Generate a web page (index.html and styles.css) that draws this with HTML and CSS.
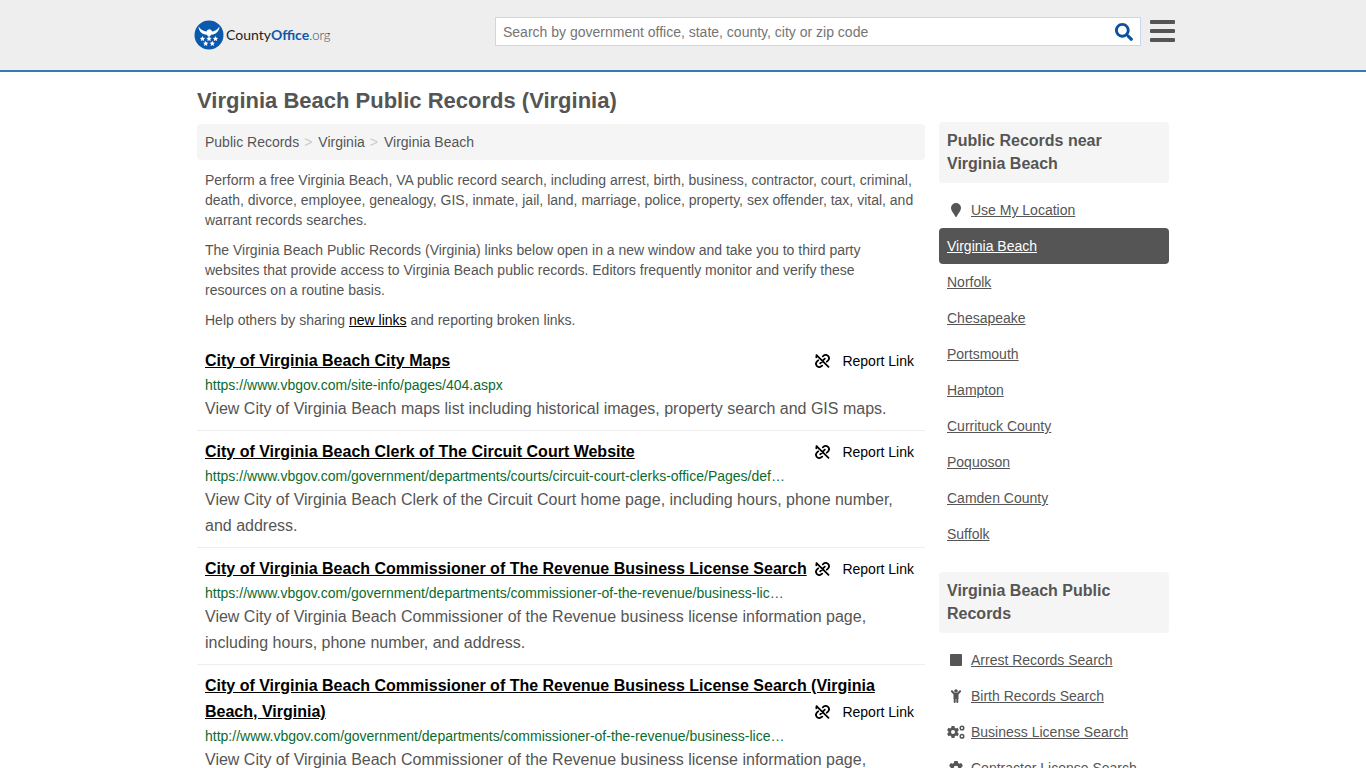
FILE: index.html
```html
<!DOCTYPE html>
<html lang="en">
<head>
<meta charset="utf-8">
<meta name="viewport" content="width=device-width, initial-scale=1">
<title>Virginia Beach Public Records (Virginia)</title>
<link rel="stylesheet" href="styles.css">
</head>
<body>
<svg class="sprite" aria-hidden="true">
  <symbol id="unlink" viewBox="0 0 15 14">
    <g fill="none" stroke="currentColor" stroke-width="1.800" stroke-linecap="round">
      <path d="M7.800 2.300C9.400.8 11.600.6 13 1.900c1.300 1.400 1.200 3.500-.3 5l-.9.800"/>
      <path d="M7.200 11.700C5.600 13.200 3.400 13.400 2 12.100.7 10.700.8 8.600 2.300 7.100l.9-.8"/>
      <path d="M1.500 1.200 13.500 12.800M9.800 4.700 5.200 9.300M1.300 3.300c0-.9.100-1.500.6-2"/>
    </g>
  </symbol>
  <symbol id="gear" viewBox="0.800 0 12.400 12.600">
    <path fill="currentColor" fill-rule="evenodd" d="M5.500 0h3l.4 1.800 1.100.7 1.800-.6 1.400 2.500L11.900 5.500v1.500l1.300 1.200-1.400 2.500-1.800-.6-1.100.7-.4 1.800h-3l-.4-1.800L4 10.100l-1.800.6L.8 8.200 2.100 7V5.500L.8 4.400l1.400-2.500 1.800.6 1.100-.7zM7 4.200a2.100 2.100 0 1 0 0 4.200 2.100 2.100 0 0 0 0-4.200z"/>
  </symbol>
</svg>
<header class="site-header">
  <div class="header-inner">
    <a class="logo" href="#" aria-label="CountyOffice.org">
      <svg class="logo-mark" viewBox="0 0 30 30" aria-hidden="true">
        <circle cx="15" cy="15" r="14.500" fill="#0b59ad"/>
        <g fill="#fff">
          <path d="M4.500 6.500c.3 4 2.500 7 6.500 8l2 .3 1 1.700h2l1-1.700 2-.3c4-1 6.200-4 6.500-8-2 3-4.500 4.600-7.300 5l-1.200-1.700-1.800-.6-1.800.9-.8 1.400C9.300 11.100 6.500 9.500 4.500 6.500z"/>
          <path id="star" d="m8.500 16 .8 1.700 1.800.2-1.300 1.300.3 1.900-1.600-.9-1.600.9.3-1.900-1.300-1.300 1.800-.2z"/>
          <use href="#star" x="6.500"/><use href="#star" x="13"/>
          <use href="#star" x="3.200" y="4.800"/><use href="#star" x="9.800" y="4.800"/>
        </g>
      </svg>
      <span class="logo-text">County<b>Office</b><span class="tld">.org</span></span>
    </a>
    <form class="search">
      <input class="search-input" type="search" aria-label="Search" placeholder="Search by government office, state, county, city or zip code">
      <button class="search-button" type="button" aria-label="Search"><svg viewBox="0 0 512 512" aria-hidden="true"><path fill="currentColor" d="M505 442.700L405.300 343c-4.500-4.500-10.600-7-17-7H372c27.600-35.300 44-79.700 44-128C416 93.100 322.900 0 208 0S0 93.100 0 208s93.100 208 208 208c48.300 0 92.700-16.400 128-44v16.300c0 6.400 2.500 12.500 7 17l99.700 99.700c9.400 9.400 24.600 9.400 33.900 0l28.300-28.300c9.400-9.400 9.400-24.600.1-34zM208 336c-70.700 0-128-57.200-128-128 0-70.700 57.200-128 128-128 70.700 0 128 57.200 128 128 0 70.700-57.200 128-128 128z"/></svg></button>
    </form>
    <button class="menu-button" type="button" aria-label="Menu"><span></span><span></span><span></span></button>
  </div>
</header>
<div class="page">
  <main class="content">
    <h1 class="title">Virginia Beach Public Records (Virginia)</h1>
    <nav class="crumbs" aria-label="Breadcrumb"><a href="#">Public Records</a><span>&gt;</span><a href="#">Virginia</a><span>&gt;</span><a href="#">Virginia Beach</a></nav>
    <div class="intro">
      <p>Perform a free Virginia Beach, VA public record search, including arrest, birth, business, contractor, court, criminal, death, divorce, employee, genealogy, GIS, inmate, jail, land, marriage, police, property, sex offender, tax, vital, and warrant records searches.</p>
      <p>The Virginia Beach Public Records (Virginia) links below open in a new window and take you to third party websites that provide access to Virginia Beach public records. Editors frequently monitor and verify these resources on a routine basis.</p>
      <p>Help others by sharing <a href="#">new links</a> and reporting broken links.</p>
    </div>
    <article class="record">
      <div class="record-head"><a class="record-title" href="#">City of Virginia Beach City Maps</a> <button class="report" type="button"><svg aria-hidden="true"><use href="#unlink"/></svg>Report Link</button></div>
      <div class="record-url">https://www.vbgov.com/site-info/pages/404.aspx</div>
      <p class="record-text">View City of Virginia Beach maps list including historical images, property search and GIS maps.</p>
    </article>
    <article class="record">
      <div class="record-head"><a class="record-title" href="#">City of Virginia Beach Clerk of The Circuit Court Website</a> <button class="report" type="button"><svg aria-hidden="true"><use href="#unlink"/></svg>Report Link</button></div>
      <div class="record-url">https://www.vbgov.com/government/departments/courts/circuit-court-clerks-office/Pages/def…</div>
      <p class="record-text">View City of Virginia Beach Clerk of the Circuit Court home page, including hours, phone number, and address.</p>
    </article>
    <article class="record">
      <div class="record-head"><a class="record-title" href="#">City of Virginia Beach Commissioner of The Revenue Business License Search</a> <button class="report" type="button"><svg aria-hidden="true"><use href="#unlink"/></svg>Report Link</button></div>
      <div class="record-url">https://www.vbgov.com/government/departments/commissioner-of-the-revenue/business-lic…</div>
      <p class="record-text">View City of Virginia Beach Commissioner of the Revenue business license information page, including hours, phone number, and address.</p>
    </article>
    <article class="record">
      <div class="record-head"><a class="record-title" href="#">City of Virginia Beach Commissioner of The Revenue Business License Search (Virginia Beach, Virginia)</a> <button class="report" type="button"><svg aria-hidden="true"><use href="#unlink"/></svg>Report Link</button></div>
      <div class="record-url">http://www.vbgov.com/government/departments/commissioner-of-the-revenue/business-lice…</div>
      <p class="record-text">View City of Virginia Beach Commissioner of the Revenue business license information page,</p>
    </article>
  </main>
  <aside class="sidebar">
    <section class="side-block">
      <h2 class="side-title">Public Records near Virginia Beach</h2>
      <ul class="side-list">
        <li><a href="#"><svg class="side-icon" viewBox="0 0 18 14" aria-hidden="true"><path fill="currentColor" d="M9 0a5 5 0 0 1 5 5c0 3-2.500 5-4.300 8.500q-.7 1-1.400 0C6.500 10 4 8 4 5a5 5 0 0 1 5-5z"/></svg><span>Use My Location</span></a></li>
        <li><a class="current" href="#"><span>Virginia Beach</span></a></li>
        <li><a href="#"><span>Norfolk</span></a></li>
        <li><a href="#"><span>Chesapeake</span></a></li>
        <li><a href="#"><span>Portsmouth</span></a></li>
        <li><a href="#"><span>Hampton</span></a></li>
        <li><a href="#"><span>Currituck County</span></a></li>
        <li><a href="#"><span>Poquoson</span></a></li>
        <li><a href="#"><span>Camden County</span></a></li>
        <li><a href="#"><span>Suffolk</span></a></li>
      </ul>
    </section>
    <section class="side-block">
      <h2 class="side-title">Virginia Beach Public Records</h2>
      <ul class="side-list">
        <li><a href="#"><svg class="side-icon" viewBox="0 0 18 14" aria-hidden="true"><rect x="3" y="1" width="12" height="12" rx="1" fill="currentColor"/></svg><span>Arrest Records Search</span></a></li>
        <li><a href="#"><svg class="side-icon" viewBox="0 0 18 14" aria-hidden="true"><g fill="none" stroke="currentColor" stroke-width="2" stroke-linecap="round"><path d="M4.900 2.300 7.500 5h3l2.600-2.700M7.700 6v7M10.300 6v7"/></g><path fill="currentColor" d="M6.700 4.500h4.600V10H6.700z"/><circle cx="9" cy="2" r="1.800" fill="currentColor"/></svg><span>Birth Records Search</span></a></li>
        <li><a href="#"><svg class="side-icon" viewBox="0 0 18 14" aria-hidden="true"><use href="#gear" x="0" y="1" width="12" height="12"/><g fill="none" stroke="currentColor" stroke-width="1.500"><circle cx="15" cy="3" r="1.800"/><circle cx="15" cy="11.200" r="1.800"/></g></svg><span>Business License Search</span></a></li>
        <li><a href="#"><svg class="side-icon" viewBox="0 0 18 14" aria-hidden="true"><use href="#gear" x="2" y="0" width="14" height="14"/></svg><span>Contractor License Search</span></a></li>
      </ul>
    </section>
  </aside>
</div>
</body>
</html>
```
FILE: styles.css
```css
* { box-sizing: border-box; }
body { margin: 0; background: #fff; color: #555; font: 14px/20px "Liberation Sans", Arial, sans-serif; }
h1, h2, p, ul { margin: 0; padding: 0; }
a { color: inherit; }
button { margin: 0; padding: 0; border: 0; background: none; font: inherit; cursor: pointer; }
.sprite { display: none; }
.site-header { background: #eee; border-bottom: 2px solid #337ab7; }
.header-inner { display: flex; align-items: flex-start; max-width: 984px; min-height: 70px; margin: 0 auto; padding: 17px 0 0 3px; }
.logo { display: flex; align-items: center; gap: 2px; margin: 3px auto 0 0; color: #222; text-decoration: none; }
.logo-mark { width: 30px; height: 30px; }
.logo-text { font: 14px/20px Lato, sans-serif; }
.logo-text b { color: #0b59ad; }
.tld { color: #444; font-size: 13px; font-weight: 300; }
.search { display: flex; width: 646px; height: 29px; background: #fff; border: 1px solid #c5d9ea; }
.search-input { flex: 1; min-width: 0; padding: 0 7px; border: 0; background: none; font: inherit; }
.search-input::placeholder { color: #757575; }
.search-button { width: 32px; color: #0b50a0; }
.search-button svg { display: block; width: 18px; height: 18px; margin: 0 auto; }
.menu-button { display: grid; gap: 5px; width: 25px; margin: 3px 0 0 9px; }
.menu-button span { height: 4px; border-radius: 1px; background: #555; }
.page { display: flex; gap: 14px; max-width: 972px; margin: 0 auto; }
.content { flex: 1; min-width: 0; }
.title { padding: 17px 0 11px; font-size: 22px; line-height: 24px; }
.crumbs { padding: 8px; border-radius: 4px; background: #f5f5f5; }
.crumbs a { text-decoration: none; }
.crumbs span { padding: 0 6px 0 5px; color: #ccc; }
.intro { padding: 10px 8px 0; }
.intro p { margin-bottom: 10px; }
.intro a { color: #000; }
.record { padding: 8px; border-bottom: 1px solid #eee; font-size: 16px; line-height: 26px; }
.record-title { color: #000; font-weight: bold; }
.report { float: right; display: flex; align-items: center; gap: 12px; height: 26px; margin-right: 3px; color: #000; font-size: 14px; }
.report svg { width: 15px; height: 14px; }
.record-url { max-width: 582px; overflow: hidden; color: #0b6b2e; font-size: 14px; line-height: 22px; text-overflow: ellipsis; white-space: nowrap; }
.sidebar { width: 230px; padding-top: 50px; }
.side-title { padding: 7px 8px 8px; border-radius: 4px; background: #f5f5f5; font-size: 16px; line-height: 23px; }
.side-list { padding: 9px 0 20px; list-style: none; }
.side-list a { display: flex; align-items: center; gap: 6px; padding: 8px; border-radius: 4px; text-decoration: none; }
.side-list span { text-decoration: underline; }
.side-list .current { background: #555; color: #fff; }
.side-icon { width: 18px; height: 14px; }
```
